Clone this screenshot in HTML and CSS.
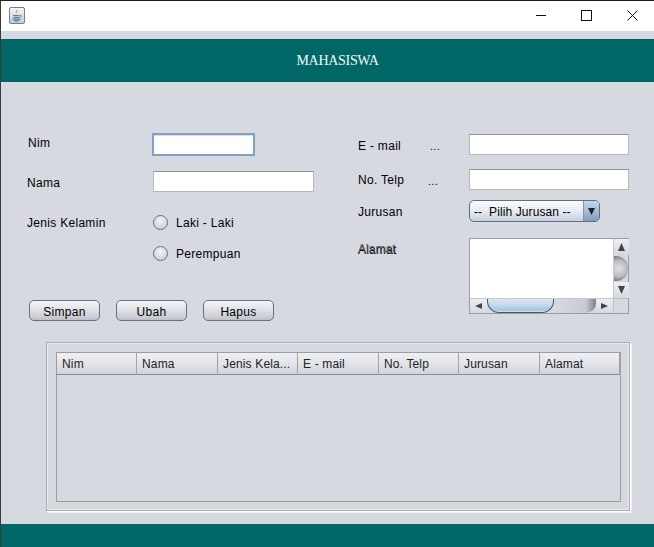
FILE: index.html
```html
<!DOCTYPE html>
<html lang="en">
<head>
    <meta charset="UTF-8">
    <meta name="viewport" content="width=device-width, initial-scale=1.0">
    <title>Mahasiswa</title>
    <link rel="stylesheet" href="styles.css">
</head>
<body>
<div class="window">

    <div class="titlebar">
        <svg class="app-icon" width="16" height="17" viewBox="0 0 16 17">
            <defs>
                <linearGradient id="iconBg" x1="0" y1="0" x2="0" y2="1">
                    <stop offset="0" stop-color="#f4f6f8"/>
                    <stop offset="1" stop-color="#c3ccd6"/>
                </linearGradient>
            </defs>
            <rect x="0.5" y="0.5" width="15" height="16" rx="1.5" fill="url(#iconBg)" stroke="#6f8092"/>
            <path d="M8.6 2.5C9.6 4 6.6 5 7.4 7.2C6 6 6.6 4.6 8.6 2.5ZM10.2 4.6C9.4 5.4 8.6 6 9.2 7.4C8.6 6.4 8.8 5.4 10.2 4.6Z" fill="#d9772b"/>
            <path d="M4 8.6H10.4M11 8.4C12.6 8 12.6 10 10.6 10.4M4.6 10.4H10M3.4 12.2H11.6M5 13.8H10" fill="none" stroke="#4e6f92" stroke-width="1"/>
        </svg>
        <div class="controls">
            <svg width="10" height="11" viewBox="0 0 10 11"><path d="M0 5.5H10" stroke="#111"/></svg>
            <svg width="11" height="11" viewBox="0 0 11 11"><rect x="0.5" y="0.5" width="10" height="10" fill="none" stroke="#111"/></svg>
            <svg width="11" height="11" viewBox="0 0 11 11"><path d="M0.5 0.5L10.5 10.5M10.5 0.5L0.5 10.5" stroke="#111"/></svg>
        </div>
    </div>

    <div class="banner">MAHASISWA</div>

    <div class="form">
        <div class="col-left">
            <div class="row row-nim">
                <label class="lbl lbl-nim">Nim</label>
                <input type="text" class="field field-focus">
            </div>
            <div class="row row-nama">
                <label class="lbl">Nama</label>
                <input type="text" class="field field-wide">
            </div>
            <div class="row row-jk">
                <label class="lbl">Jenis Kelamin</label>
                <span class="radio"></span>
                <span class="radio-text">Laki - Laki</span>
            </div>
            <div class="row row-pr">
                <span class="lbl"></span>
                <span class="radio"></span>
                <span class="radio-text">Perempuan</span>
            </div>
            <div class="buttons">
                <button class="btn">Simpan</button>
                <button class="btn">Ubah</button>
                <button class="btn">Hapus</button>
            </div>
        </div>

        <div class="col-right">
            <div class="rrow rrow-email">
                <label class="rlbl rlbl-down">E - mail</label>
                <span class="dots dots-email">...</span>
                <input type="text" class="field field-right">
            </div>
            <div class="rrow rrow-telp">
                <label class="rlbl">No. Telp</label>
                <span class="dots dots-telp">...</span>
                <input type="text" class="field field-right">
            </div>
            <div class="rrow rrow-jur">
                <label class="rlbl">Jurusan</label>
                <div class="combo">
                    <span class="combo-text">-- &nbsp;Pilih Jurusan --</span>
                    <span class="combo-arrow"><svg width="7" height="7" viewBox="0 0 7 7"><path d="M0 0H7L3.5 7Z" fill="#222"/></svg></span>
                </div>
            </div>
            <div class="rrow rrow-alamat">
                <label class="rlbl alamat"><span>Alamat</span><span class="ghost">Alamat</span></label>
                <div class="scrollpane">
                    <div class="text-area"></div>
                    <div class="vbar">
                        <span class="sb-btn"><svg width="7" height="8" viewBox="0 0 7 8"><path d="M0 8H7L3.5 0Z" fill="#444"/></svg></span>
                        <span class="vthumb"></span>
                        <span class="sb-btn"><svg width="7" height="8" viewBox="0 0 7 8"><path d="M0 0H7L3.5 8Z" fill="#444"/></svg></span>
                    </div>
                    <div class="hbar">
                        <span class="sb-btn"><svg width="7" height="6" viewBox="0 0 7 6"><path d="M7 0V6L0 3Z" fill="#444"/></svg></span>
                        <span class="hthumb"></span>
                        <span class="htrack"></span>
                        <span class="sb-btn"><svg width="7" height="6" viewBox="0 0 7 6"><path d="M0 0V6L7 3Z" fill="#444"/></svg></span>
                    </div>
                    <div class="corner"></div>
                </div>
            </div>
        </div>
    </div>

    <div class="table-wrap">
        <div class="table-box">
            <div class="thead">
                <div class="th">Nim</div>
                <div class="th">Nama</div>
                <div class="th">Jenis Kela...</div>
                <div class="th">E - mail</div>
                <div class="th">No. Telp</div>
                <div class="th">Jurusan</div>
                <div class="th">Alamat</div>
            </div>
        </div>
    </div>

    <div class="footer"></div>
</div>
</body>
</html>
```

FILE: styles.css
```css
* {
    box-sizing: border-box;
}
html, body {
    margin: 0;
    padding: 0;
}
body {
    width: 654px;
    height: 547px;
    overflow: hidden;
    font-family: "Liberation Sans", Arial, sans-serif;
    font-size: 12px;
    letter-spacing: 0.3px;
    color: #000;
    background-color: #d6d9df;
}
.window {
    height: 547px;
    border-top: 1px solid #1c1c1c;
    border-left: 1px solid #3a3a3a;
    display: flex;
    flex-direction: column;
}

/* title bar */
.titlebar {
    height: 30px;
    flex: none;
    background-color: #fff;
    display: flex;
    align-items: center;
    justify-content: space-between;
    padding: 0 16px 0 8px;
}
.app-icon {
    margin-top: -1px;
}
.controls {
    display: flex;
    align-items: center;
    gap: 35px;
    margin-top: -2px;
}

.banner {
    height: 43px;
    flex: none;
    margin-top: 8px;
    padding-left: 20px;
    background-color: #006666;
    color: #f2fbfa;
    font-family: "Liberation Serif", "Times New Roman", serif;
    font-size: 14px;
    letter-spacing: -0.3px;
    display: flex;
    align-items: center;
    justify-content: center;
}

/* form */
.form {
    height: 260px;
    flex: none;
    display: flex;
}
.col-left {
    width: 357px;
    flex: none;
    padding-left: 26px;
    padding-top: 51px;
}
.col-right {
    flex: 1;
    padding-top: 52px;
}
.row {
    display: flex;
    align-items: center;
}
.row-nim {
    height: 23px;
}
.row-nama {
    height: 21px;
    margin-top: 15px;
}
.row-jk {
    height: 16px;
    margin-top: 22px;
}
.row-pr {
    height: 16px;
    margin-top: 15px;
}
.lbl {
    width: 126px;
    flex: none;
}
.row-nim .lbl {
    padding-left: 1px;
    margin-top: -3px;
}
.row-nama .lbl,
.row-jk .lbl {
    padding-top: 2px;
}
.row-nim .field {
    margin-left: -1px;
}
.field {
    height: 21px;
    padding: 0;
    background-color: #fff;
    border: 1px solid #b4b7bb;
    border-top-color: #8f9296;
    border-radius: 0;
    outline: none;
}
.field-focus {
    width: 103px;
    height: 23px;
    border: 2px solid #7f9fc4;
    box-shadow: inset 0 1px 0 #dcdcdc;
}
.field-wide {
    width: 161px;
}
.field-right {
    width: 160px;
}
.radio {
    width: 15px;
    height: 15px;
    flex: none;
    border-radius: 50%;
    border: 1px solid #6b7078;
    background: radial-gradient(circle at 50% 35%, #f2f3f5, #c3c7cf);
}
.radio-text {
    margin-left: 8px;
    padding-top: 2px;
}
.buttons {
    display: flex;
    gap: 16px;
    margin-top: 39px;
    padding-left: 2px;
}
.btn {
    width: 71px;
    height: 21px;
    padding: 2px 0 0;
    font: inherit;
    letter-spacing: 0.3px;
    color: #000;
    border: 1px solid #6c7178;
    border-radius: 5px;
    background: linear-gradient(#f5f6f8 0%, #dfe1e6 45%, #cdd0d7 80%, #bcc0c8 100%);
}

.rrow {
    display: flex;
}
.rrow-email,
.rrow-telp {
    align-items: center;
    height: 21px;
}
.rrow-telp {
    margin-top: 14px;
}
.rrow-jur {
    align-items: center;
    height: 22px;
    margin-top: 10px;
}
.rrow-alamat {
    margin-top: 16px;
}
.rlbl {
    width: 111px;
    flex: none;
}
.rrow-jur .rlbl {
    padding-top: 2px;
}
.rlbl-down {
    padding-top: 2px;
}
.dots {
    width: 40px;
    flex: none;
    font-size: 11px;
    padding-top: 3px;
}
.rrow-email .rlbl,
.rrow-telp .rlbl {
    width: 71px;
}
.rrow-telp .rlbl {
    padding-top: 1px;
}
.dots-telp {
    margin-left: -1px;
    width: 41px;
}
.dots-email {
    margin-left: 1px;
    width: 39px;
}
.combo {
    width: 131px;
    height: 22px;
    display: flex;
    border: 1px solid #5f6f84;
    border-radius: 5px;
    overflow: hidden;
    background: linear-gradient(#fbfcfd 0%, #e6ebf1 50%, #c6d0dc 100%);
}
.combo-text {
    flex: 1;
    padding: 1px 0 0 4px;
    line-height: 20px;
    letter-spacing: 0.1px;
}
.combo-arrow {
    width: 16px;
    flex: none;
    display: flex;
    align-items: center;
    justify-content: center;
    border-left: 1px solid #8397ad;
    background: linear-gradient(#c5d5e6 0%, #a5bdd6 50%, #7f9cba 100%);
}
.alamat {
    display: grid;
    padding-top: 5px;
    letter-spacing: 0.2px;
}
.alamat span {
    grid-area: 1 / 1;
}
.alamat .ghost {
    margin-top: -1px;
    letter-spacing: 0.05px;
    color: #5a5a5a;
}
.scrollpane {
    width: 160px;
    height: 76px;
    display: grid;
    grid-template-columns: 1fr 15px;
    grid-template-rows: 1fr 15px;
    border: 1px solid #9a9da3;
}
.text-area {
    background-color: #fff;
}
.vbar {
    display: flex;
    flex-direction: column;
    justify-content: space-between;
    background-color: #d6d9df;
    border-left: 1px solid #c5c8ce;
}
.sb-btn {
    height: 16px;
    width: 15px;
    flex: none;
    display: flex;
    align-items: center;
    justify-content: center;
    background: linear-gradient(#eceef1, #d6d9df);
}
.vthumb {
    width: 14px;
    height: 25px;
    border-radius: 0 12px 12px 0;
    background: radial-gradient(circle at 35% 50%, #dfe0e3 0%, #bdbfc4 50%, #55575c 100%);
}
.hbar {
    display: flex;
    align-items: stretch;
    background-color: #d6d9df;
    border-top: 1px solid #c5c8ce;
}
.hbar .sb-btn {
    height: auto;
    width: 17px;
}
.hthumb {
    width: 67px;
    border: 1px solid #3f5a78;
    border-top: none;
    border-radius: 0 0 12px 12px;
    background: linear-gradient(#dbe6f0 0%, #c4d7e8 50%, #a9c4db 85%, #dbe6f0 100%);
}
.htrack {
    flex: 1;
    border-radius: 0 0 10px 0;
    background: linear-gradient(90deg, #d6d9df 0%, #c8cbd1 75%, #7d8086 100%);
}
.corner {
    background-color: #d6d9df;
    border-left: 1px solid #bcbfc5;
    border-top: 1px solid #bcbfc5;
}

/* table */
.table-wrap {
    width: 584px;
    height: 169px;
    flex: none;
    margin-left: 45px;
    padding: 9px 8px 8px 9px;
    border: 1px solid #a9acb2;
    box-shadow: 1px 1px 0 #fff, 2px 2px 0 #eef0f3, inset 1px 1px 0 #e9ebee, inset -1px -1px 0 #e9ebee;
}
.table-box {
    height: 150px;
    border: 1px solid #9a9da3;
}
.thead {
    height: 22px;
    display: grid;
    grid-template-columns: 80px 81px 80px 81px 80px 81px 80px;
    border-bottom: 1px solid #8a8d94;
    background: linear-gradient(#eef0f3 0%, #e2e4e9 50%, #d0d3da 100%);
    letter-spacing: 0.15px;
}
.th {
    padding: 1px 0 0 5px;
    line-height: 21px;
    border-right: 1px solid #a0a3aa;
    color: #222;
    white-space: nowrap;
}

.footer {
    flex: 1;
    margin-top: 13px;
    background-color: #006666;
}
```
